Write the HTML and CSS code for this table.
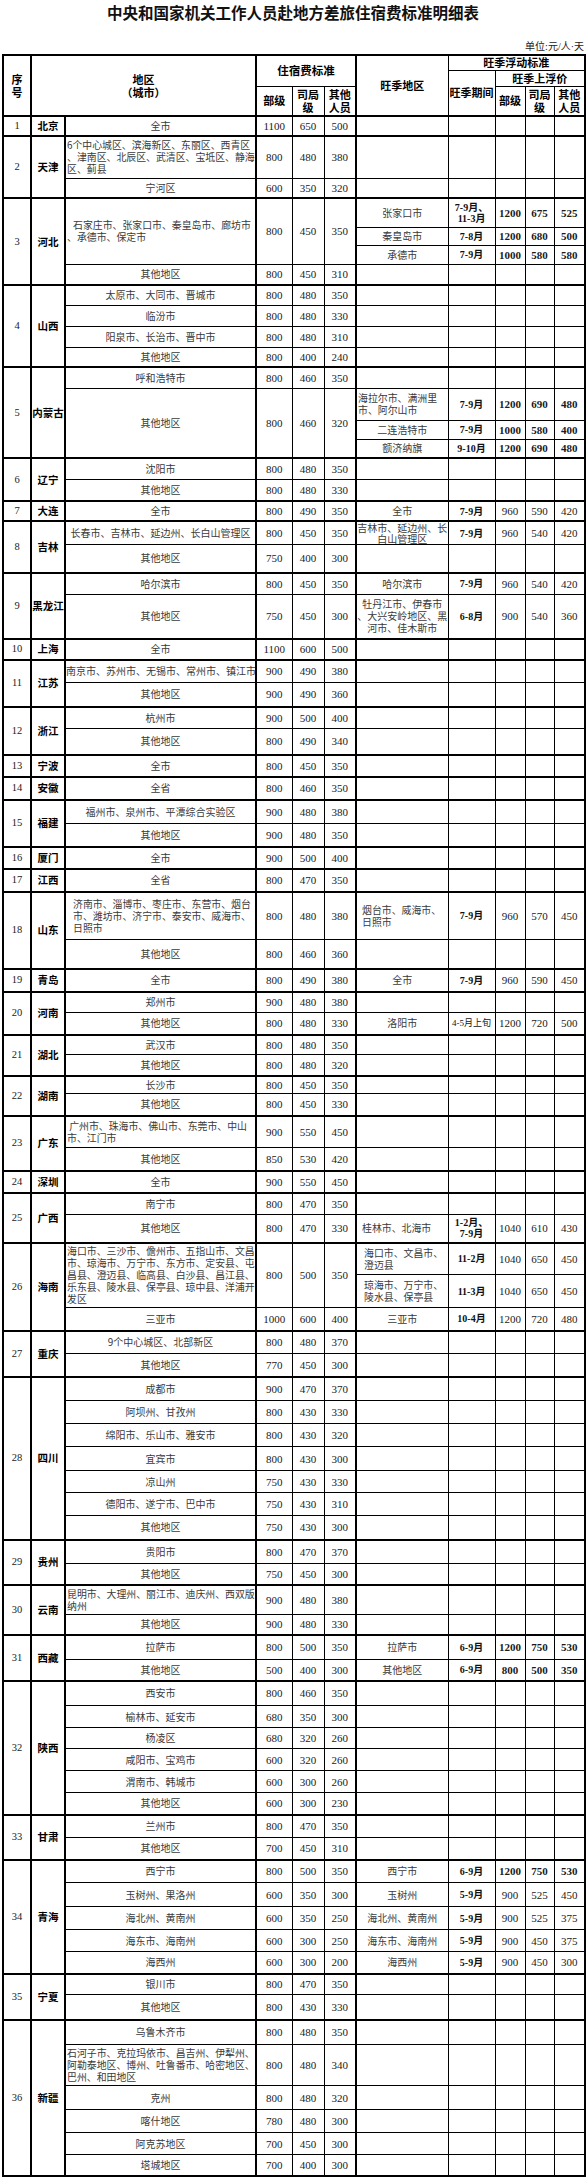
FILE: index.html
```html
<!DOCTYPE html>
<html lang="zh-CN">
<head>
<meta charset="utf-8">
<title>中央和国家机关工作人员赴地方差旅住宿费标准明细表</title>
<link rel="stylesheet" href="styles.css">
</head>
<body>
<div class="page">
<h1 class="title">中央和国家机关工作人员赴地方差旅住宿费标准明细表</h1>
<div class="unit">单位:元/人·天</div>
<table class="t">
<colgroup><col class="w1"><col class="w2"><col class="w3"><col class="w4"><col class="w5"><col class="w6"><col class="w7"><col class="w8"><col class="w9"><col class="w10"><col class="w11"></colgroup>
<thead>
<tr class="hh1"><th rowspan="3">序<br>号</th><th rowspan="3" colspan="2">地区<br>（城市）</th><th colspan="3" rowspan="2" class="big">住宿费标准</th><th rowspan="3">旺季地区</th><th colspan="4">旺季浮动标准</th></tr>
<tr class="hh2"><th rowspan="2">旺季期间</th><th colspan="3">旺季上浮价</th></tr>
<tr class="hh3"><th>部级</th><th>司局<br>级</th><th>其他<br>人员</th><th>部级</th><th>司局<br>级</th><th>其他<br>人员</th></tr>
</thead>
<tbody>
<tr class="h20"><td class="n">1</td><td class="p">北京</td><td class="c">全市</td><td>1100</td><td>650</td><td>500</td><td></td><td></td><td></td><td></td><td></td></tr>
</tbody>
<tbody>
<tr class="h42"><td class="n" rowspan="2">2</td><td class="p" rowspan="2">天津</td><td class="c l">6个中心城区、滨海新区、东丽区、西青区<br>、津南区、北辰区、武清区、宝坻区、静海<br>区、蓟县</td><td>800</td><td>480</td><td>380</td><td></td><td></td><td></td><td></td><td></td></tr>
<tr class="h20"><td class="c">宁河区</td><td>600</td><td>350</td><td>320</td><td></td><td></td><td></td><td></td><td></td></tr>
</tbody>
<tbody>
<tr class="h29"><td class="n" rowspan="4">3</td><td class="p" rowspan="4">河北</td><td class="c l" rowspan="3"><span class="ind">石家庄市、张家口市、秦皇岛市、廊坊市</span><br>、承德市、保定市</td><td rowspan="3">800</td><td rowspan="3">450</td><td rowspan="3">350</td><td class="c">张家口市</td><td class="pd">7-9月、<br>11-3月</td><td class="b">1200</td><td class="b">675</td><td class="b">525</td></tr>
<tr class="h18"><td class="c">秦皇岛市</td><td class="pd">7-8月</td><td class="b">1200</td><td class="b">680</td><td class="b">500</td></tr>
<tr class="h19"><td class="c">承德市</td><td class="pd">7-9月</td><td class="b">1000</td><td class="b">580</td><td class="b">580</td></tr>
<tr class="h21"><td class="c">其他地区</td><td>800</td><td>450</td><td>310</td><td></td><td></td><td></td><td></td><td></td></tr>
</tbody>
<tbody>
<tr class="h20"><td class="n" rowspan="4">4</td><td class="p" rowspan="4">山西</td><td class="c">太原市、大同市、晋城市</td><td>800</td><td>480</td><td>350</td><td></td><td></td><td></td><td></td><td></td></tr>
<tr class="h21"><td class="c">临汾市</td><td>800</td><td>480</td><td>330</td><td></td><td></td><td></td><td></td><td></td></tr>
<tr class="h21"><td class="c">阳泉市、长治市、晋中市</td><td>800</td><td>480</td><td>310</td><td></td><td></td><td></td><td></td><td></td></tr>
<tr class="h20"><td class="c">其他地区</td><td>800</td><td>400</td><td>240</td><td></td><td></td><td></td><td></td><td></td></tr>
</tbody>
<tbody>
<tr class="h21"><td class="n" rowspan="4">5</td><td class="p" rowspan="4">内蒙古</td><td class="c">呼和浩特市</td><td>800</td><td>460</td><td>350</td><td></td><td></td><td></td><td></td><td></td></tr>
<tr class="h32"><td class="c" rowspan="3">其他地区</td><td rowspan="3">800</td><td rowspan="3">460</td><td rowspan="3">320</td><td class="c l">海拉尔市、满洲里<br>市、阿尔山市</td><td class="pd">7-9月</td><td class="b">1200</td><td class="b">690</td><td class="b">480</td></tr>
<tr class="h19"><td class="c">二连浩特市</td><td class="pd">7-9月</td><td class="b">1000</td><td class="b">580</td><td class="b">400</td></tr>
<tr class="h19"><td class="c">额济纳旗</td><td class="pd">9-10月</td><td class="b">1200</td><td class="b">690</td><td class="b">480</td></tr>
</tbody>
<tbody>
<tr class="h21"><td class="n" rowspan="2">6</td><td class="p" rowspan="2">辽宁</td><td class="c">沈阳市</td><td>800</td><td>480</td><td>350</td><td></td><td></td><td></td><td></td><td></td></tr>
<tr class="h22"><td class="c">其他地区</td><td>800</td><td>480</td><td>330</td><td></td><td></td><td></td><td></td><td></td></tr>
</tbody>
<tbody>
<tr class="h20"><td class="n">7</td><td class="p">大连</td><td class="c">全市</td><td>800</td><td>490</td><td>350</td><td class="c">全市</td><td class="pd">7-9月</td><td>960</td><td>590</td><td>420</td></tr>
</tbody>
<tbody>
<tr class="h23"><td class="n" rowspan="2">8</td><td class="p" rowspan="2">吉林</td><td class="c">长春市、吉林市、延边州、长白山管理区</td><td>800</td><td>450</td><td>350</td><td class="c tight">吉林市、延边州、长<br>白山管理区</td><td class="pd">7-9月</td><td>960</td><td>540</td><td>420</td></tr>
<tr class="h28"><td class="c">其他地区</td><td>750</td><td>400</td><td>300</td><td></td><td></td><td></td><td></td><td></td></tr>
</tbody>
<tbody>
<tr class="h22"><td class="n" rowspan="2">9</td><td class="p" rowspan="2">黑龙江</td><td class="c">哈尔滨市</td><td>800</td><td>450</td><td>350</td><td class="c">哈尔滨市</td><td class="pd">7-9月</td><td>960</td><td>540</td><td>420</td></tr>
<tr class="h44"><td class="c">其他地区</td><td>750</td><td>450</td><td>300</td><td class="c">牡丹江市、伊春市<br>、大兴安岭地区、黑<br>河市、佳木斯市</td><td class="pd">6-8月</td><td>900</td><td>540</td><td>360</td></tr>
</tbody>
<tbody>
<tr class="h21"><td class="n">10</td><td class="p">上海</td><td class="c">全市</td><td>1100</td><td>600</td><td>500</td><td></td><td></td><td></td><td></td><td></td></tr>
</tbody>
<tbody>
<tr class="h23"><td class="n" rowspan="2">11</td><td class="p" rowspan="2">江苏</td><td class="c">南京市、苏州市、无锡市、常州市、镇江市</td><td>900</td><td>490</td><td>380</td><td></td><td></td><td></td><td></td><td></td></tr>
<tr class="h24"><td class="c">其他地区</td><td>900</td><td>490</td><td>360</td><td></td><td></td><td></td><td></td><td></td></tr>
</tbody>
<tbody>
<tr class="h22"><td class="n" rowspan="2">12</td><td class="p" rowspan="2">浙江</td><td class="c">杭州市</td><td>900</td><td>500</td><td>400</td><td></td><td></td><td></td><td></td><td></td></tr>
<tr class="h26"><td class="c">其他地区</td><td>800</td><td>490</td><td>340</td><td></td><td></td><td></td><td></td><td></td></tr>
</tbody>
<tbody>
<tr class="h22"><td class="n">13</td><td class="p">宁波</td><td class="c">全市</td><td>800</td><td>450</td><td>350</td><td></td><td></td><td></td><td></td><td></td></tr>
</tbody>
<tbody>
<tr class="h23"><td class="n">14</td><td class="p">安徽</td><td class="c">全省</td><td>800</td><td>460</td><td>350</td><td></td><td></td><td></td><td></td><td></td></tr>
</tbody>
<tbody>
<tr class="h24"><td class="n" rowspan="2">15</td><td class="p" rowspan="2">福建</td><td class="c">福州市、泉州市、平潭综合实验区</td><td>900</td><td>480</td><td>380</td><td></td><td></td><td></td><td></td><td></td></tr>
<tr class="h23"><td class="c">其他地区</td><td>900</td><td>480</td><td>350</td><td></td><td></td><td></td><td></td><td></td></tr>
</tbody>
<tbody>
<tr class="h22"><td class="n">16</td><td class="p">厦门</td><td class="c">全市</td><td>900</td><td>500</td><td>400</td><td></td><td></td><td></td><td></td><td></td></tr>
</tbody>
<tbody>
<tr class="h23"><td class="n">17</td><td class="p">江西</td><td class="c">全省</td><td>800</td><td>470</td><td>350</td><td></td><td></td><td></td><td></td><td></td></tr>
</tbody>
<tbody>
<tr class="h48"><td class="n" rowspan="2">18</td><td class="p" rowspan="2">山东</td><td class="c l ind2">济南市、淄博市、枣庄市、东营市、烟台<br>市、潍坊市、济宁市、泰安市、威海市、<br>日照市</td><td>800</td><td>480</td><td>380</td><td class="c l ind3">烟台市、威海市、<br>日照市</td><td class="pd">7-9月</td><td>960</td><td>570</td><td>450</td></tr>
<tr class="h29"><td class="c">其他地区</td><td>800</td><td>460</td><td>360</td><td></td><td></td><td></td><td></td><td></td></tr>
</tbody>
<tbody>
<tr class="h23"><td class="n">19</td><td class="p">青岛</td><td class="c">全市</td><td>800</td><td>490</td><td>380</td><td class="c">全市</td><td class="pd">7-9月</td><td>960</td><td>590</td><td>450</td></tr>
</tbody>
<tbody>
<tr class="h21"><td class="n" rowspan="2">20</td><td class="p" rowspan="2">河南</td><td class="c">郑州市</td><td>900</td><td>480</td><td>380</td><td></td><td></td><td></td><td></td><td></td></tr>
<tr class="h22"><td class="c">其他地区</td><td>800</td><td>480</td><td>330</td><td class="c">洛阳市</td><td class="pd sm">4-5月上旬</td><td>1200</td><td>720</td><td>500</td></tr>
</tbody>
<tbody>
<tr class="h20"><td class="n" rowspan="2">21</td><td class="p" rowspan="2">湖北</td><td class="c">武汉市</td><td>800</td><td>480</td><td>350</td><td></td><td></td><td></td><td></td><td></td></tr>
<tr class="h21"><td class="c">其他地区</td><td>800</td><td>480</td><td>320</td><td></td><td></td><td></td><td></td><td></td></tr>
</tbody>
<tbody>
<tr class="h18"><td class="n" rowspan="2">22</td><td class="p" rowspan="2">湖南</td><td class="c">长沙市</td><td>800</td><td>450</td><td>350</td><td></td><td></td><td></td><td></td><td></td></tr>
<tr class="h22"><td class="c">其他地区</td><td>800</td><td>450</td><td>330</td><td></td><td></td><td></td><td></td><td></td></tr>
</tbody>
<tbody>
<tr class="h32"><td class="n" rowspan="2">23</td><td class="p" rowspan="2">广东</td><td class="c l">&nbsp;广州市、珠海市、佛山市、东莞市、中山<br>市、江门市</td><td>900</td><td>550</td><td>450</td><td></td><td></td><td></td><td></td><td></td></tr>
<tr class="h23"><td class="c">其他地区</td><td>850</td><td>530</td><td>420</td><td></td><td></td><td></td><td></td><td></td></tr>
</tbody>
<tbody>
<tr class="h22"><td class="n">24</td><td class="p">深圳</td><td class="c">全市</td><td>900</td><td>550</td><td>450</td><td></td><td></td><td></td><td></td><td></td></tr>
</tbody>
<tbody>
<tr class="h22"><td class="n" rowspan="2">25</td><td class="p" rowspan="2">广西</td><td class="c">南宁市</td><td>800</td><td>470</td><td>350</td><td></td><td></td><td></td><td></td><td></td></tr>
<tr class="h28"><td class="c">其他地区</td><td>800</td><td>470</td><td>330</td><td class="c l ind3">桂林市、北海市</td><td class="pd">1-2月、<br>7-9月</td><td>1040</td><td>610</td><td>430</td></tr>
</tbody>
<tbody>
<tr class="h32"><td class="n" rowspan="3">26</td><td class="p" rowspan="3">海南</td><td class="c l" rowspan="2">海口市、三沙市、儋州市、五指山市、文昌<br>市、琼海市、万宁市、东方市、定安县、屯<br>昌县、澄迈县、临高县、白沙县、昌江县、<br>乐东县、陵水县、保亭县、琼中县、洋浦开<br>发区</td><td rowspan="2">800</td><td rowspan="2">500</td><td rowspan="2">350</td><td class="c l ind4">海口市、文昌市、<br>澄迈县</td><td class="pd">11-2月</td><td>1040</td><td>650</td><td>450</td></tr>
<tr class="h33"><td class="c l ind4">琼海市、万宁市、<br>陵水县、保亭县</td><td class="pd">11-3月</td><td>1040</td><td>650</td><td>450</td></tr>
<tr class="h23"><td class="c">三亚市</td><td>1000</td><td>600</td><td>400</td><td class="c">三亚市</td><td class="pd">10-4月</td><td>1200</td><td>720</td><td>480</td></tr>
</tbody>
<tbody>
<tr class="h23"><td class="n" rowspan="2">27</td><td class="p" rowspan="2">重庆</td><td class="c">9个中心城区、北部新区</td><td>800</td><td>480</td><td>370</td><td></td><td></td><td></td><td></td><td></td></tr>
<tr class="h23"><td class="c">其他地区</td><td>770</td><td>450</td><td>300</td><td></td><td></td><td></td><td></td><td></td></tr>
</tbody>
<tbody>
<tr class="h24"><td class="n" rowspan="7">28</td><td class="p" rowspan="7">四川</td><td class="c">成都市</td><td>900</td><td>470</td><td>370</td><td></td><td></td><td></td><td></td><td></td></tr>
<tr class="h23"><td class="c">阿坝州、甘孜州</td><td>800</td><td>430</td><td>330</td><td></td><td></td><td></td><td></td><td></td></tr>
<tr class="h23"><td class="c">绵阳市、乐山市、雅安市</td><td>800</td><td>430</td><td>320</td><td></td><td></td><td></td><td></td><td></td></tr>
<tr class="h24"><td class="c">宜宾市</td><td>800</td><td>430</td><td>300</td><td></td><td></td><td></td><td></td><td></td></tr>
<tr class="h22"><td class="c">凉山州</td><td>750</td><td>430</td><td>330</td><td></td><td></td><td></td><td></td><td></td></tr>
<tr class="h23"><td class="c">德阳市、遂宁市、巴中市</td><td>750</td><td>430</td><td>310</td><td></td><td></td><td></td><td></td><td></td></tr>
<tr class="h24"><td class="c">其他地区</td><td>750</td><td>430</td><td>300</td><td></td><td></td><td></td><td></td><td></td></tr>
</tbody>
<tbody>
<tr class="h24"><td class="n" rowspan="2">29</td><td class="p" rowspan="2">贵州</td><td class="c">贵阳市</td><td>800</td><td>470</td><td>370</td><td></td><td></td><td></td><td></td><td></td></tr>
<tr class="h21"><td class="c">其他地区</td><td>750</td><td>450</td><td>300</td><td></td><td></td><td></td><td></td><td></td></tr>
</tbody>
<tbody>
<tr class="h30"><td class="n" rowspan="2">30</td><td class="p" rowspan="2">云南</td><td class="c l">昆明市、大理州、丽江市、迪庆州、西双版<br>纳州</td><td>900</td><td>480</td><td>380</td><td></td><td></td><td></td><td></td><td></td></tr>
<tr class="h20"><td class="c">其他地区</td><td>900</td><td>480</td><td>330</td><td></td><td></td><td></td><td></td><td></td></tr>
</tbody>
<tbody>
<tr class="h25"><td class="n" rowspan="2">31</td><td class="p" rowspan="2">西藏</td><td class="c">拉萨市</td><td>800</td><td>500</td><td>350</td><td class="c">拉萨市</td><td class="pd">6-9月</td><td class="b">1200</td><td class="b">750</td><td class="b">530</td></tr>
<tr class="h21"><td class="c">其他地区</td><td>500</td><td>400</td><td>300</td><td class="c">其他地区</td><td class="pd">6-9月</td><td class="b">800</td><td class="b">500</td><td class="b">350</td></tr>
</tbody>
<tbody>
<tr class="h25"><td class="n" rowspan="6">32</td><td class="p" rowspan="6">陕西</td><td class="c">西安市</td><td>800</td><td>460</td><td>350</td><td></td><td></td><td></td><td></td><td></td></tr>
<tr class="h22"><td class="c">榆林市、延安市</td><td>680</td><td>350</td><td>300</td><td></td><td></td><td></td><td></td><td></td></tr>
<tr class="h21"><td class="c">杨凌区</td><td>680</td><td>320</td><td>260</td><td></td><td></td><td></td><td></td><td></td></tr>
<tr class="h22"><td class="c">咸阳市、宝鸡市</td><td>600</td><td>320</td><td>260</td><td></td><td></td><td></td><td></td><td></td></tr>
<tr class="h22"><td class="c">渭南市、韩城市</td><td>600</td><td>300</td><td>260</td><td></td><td></td><td></td><td></td><td></td></tr>
<tr class="h22"><td class="c">其他地区</td><td>600</td><td>300</td><td>230</td><td></td><td></td><td></td><td></td><td></td></tr>
</tbody>
<tbody>
<tr class="h23"><td class="n" rowspan="2">33</td><td class="p" rowspan="2">甘肃</td><td class="c">兰州市</td><td>800</td><td>470</td><td>350</td><td></td><td></td><td></td><td></td><td></td></tr>
<tr class="h22"><td class="c">其他地区</td><td>700</td><td>450</td><td>310</td><td></td><td></td><td></td><td></td><td></td></tr>
</tbody>
<tbody>
<tr class="h23"><td class="n" rowspan="5">34</td><td class="p" rowspan="5">青海</td><td class="c">西宁市</td><td>800</td><td>500</td><td>350</td><td class="c">西宁市</td><td class="pd">6-9月</td><td class="b">1200</td><td class="b">750</td><td class="b">530</td></tr>
<tr class="h24"><td class="c">玉树州、果洛州</td><td>600</td><td>350</td><td>300</td><td class="c">玉树州</td><td class="pd">5-9月</td><td>900</td><td>525</td><td>450</td></tr>
<tr class="h23"><td class="c">海北州、黄南州</td><td>600</td><td>350</td><td>250</td><td class="c">海北州、黄南州</td><td class="pd">5-9月</td><td>900</td><td>525</td><td>375</td></tr>
<tr class="h22"><td class="c">海东市、海南州</td><td>600</td><td>300</td><td>250</td><td class="c">海东市、海南州</td><td class="pd">5-9月</td><td>900</td><td>450</td><td>375</td></tr>
<tr class="h22"><td class="c">海西州</td><td>600</td><td>300</td><td>200</td><td class="c">海西州</td><td class="pd">5-9月</td><td>900</td><td>450</td><td>300</td></tr>
</tbody>
<tbody>
<tr class="h21"><td class="n" rowspan="2">35</td><td class="p" rowspan="2">宁夏</td><td class="c">银川市</td><td>800</td><td>470</td><td>350</td><td></td><td></td><td></td><td></td><td></td></tr>
<tr class="h25"><td class="c">其他地区</td><td>800</td><td>430</td><td>330</td><td></td><td></td><td></td><td></td><td></td></tr>
</tbody>
<tbody>
<tr class="h25"><td class="n" rowspan="6">36</td><td class="p" rowspan="6">新疆</td><td class="c">乌鲁木齐市</td><td>800</td><td>480</td><td>350</td><td></td><td></td><td></td><td></td><td></td></tr>
<tr class="h41"><td class="c l">石河子市、克拉玛依市、昌吉州、伊犁州、<br>阿勒泰地区、博州、吐鲁番市、哈密地区、<br>巴州、和田地区</td><td>800</td><td>480</td><td>340</td><td></td><td></td><td></td><td></td><td></td></tr>
<tr class="h24"><td class="c">克州</td><td>800</td><td>480</td><td>320</td><td></td><td></td><td></td><td></td><td></td></tr>
<tr class="h23"><td class="c">喀什地区</td><td>780</td><td>480</td><td>300</td><td></td><td></td><td></td><td></td><td></td></tr>
<tr class="h22"><td class="c">阿克苏地区</td><td>700</td><td>450</td><td>300</td><td></td><td></td><td></td><td></td><td></td></tr>
<tr class="h21"><td class="c">塔城地区</td><td>700</td><td>400</td><td>300</td><td></td><td></td><td></td><td></td><td></td></tr>
</tbody>
</table>
</div>
</body>
</html>
```
FILE: styles.css
```css
html, body {
  margin: 0;
  padding: 0;
  background: #fff;
}
body {
  font-family: "Noto Sans CJK SC", sans-serif;
  color: #000;
}
.page {
  width: 586px;
}
.title {
  margin: 0;
  padding-top: 1px;
  height: 22px;
  text-align: center;
  font-family: "Noto Sans CJK SC", sans-serif;
  font-weight: 700;
  font-size: 15.5px;
  line-height: 22px;
  color: #111;
}
.unit {
  margin-top: 18px;
  height: 12px;
  padding-right: 2px;
  text-align: right;
  font-family: "Liberation Serif", "Noto Sans CJK SC", serif;
  font-size: 10px;
  line-height: 12px;
  color: #222;
}
.t {
  margin: 1px 0 0 2px;
  width: 582px;
  table-layout: fixed;
  border-collapse: collapse;
  border: 2px solid #000;
}
.w1 { width: 28px; border-right: 2px solid #000; }
.w2 { width: 34px; border-right: 2px solid #000; }
.w3 { width: 191px; border-right: 2px solid #000; }
.w4 { width: 36px; }
.w5 { width: 32px; }
.w6 { width: 32px; border-right: 2px solid #000; }
.w7 { width: 92px; }
.w8 { width: 47px; }
.w9 { width: 30px; }
.w10 { width: 29px; }
.w11 { width: 31px; }

.t th, .t td {
  border: 1px solid #000;
  padding: 0;
  text-align: center;
  vertical-align: middle;
  overflow: hidden;
}
.t thead {
  border-bottom: 2px solid #000;
}
.t tbody {
  border-top: 2px solid #000;
}
.t th {
  font-family: "Noto Sans CJK SC", sans-serif;
  font-weight: 700;
  font-size: 11px;
  line-height: 13px;
  color: #000;
}
.t th.big {
  font-size: 11.5px;
}
.hh1 { height: 15px; }
.hh2 { height: 16px; }
.hh3 { height: 30px; }

.t td {
  font-family: "Liberation Serif", "Noto Sans CJK SC", serif;
  font-size: 11px;
  line-height: 12px;
  color: #1a1a1a;
}
.t td.n {
  font-size: 10.5px;
  color: #222;
}
.t td.p {
  font-family: "Noto Sans CJK SC", sans-serif;
  font-weight: 700;
  font-size: 10.5px;
  white-space: nowrap;
  overflow: visible;
  color: #000;
}
.t td.c {
  font-family: "Noto Sans CJK SC", sans-serif;
  font-size: 10px;
  line-height: 12px;
  color: #3a3a3a;
  white-space: nowrap;
}
.t td.l {
  text-align: left;
  padding-left: 1px;
  font-size: 9.9px;
}
.t td.tight {
  line-height: 11px;
}
.t td.ind2 { padding-left: 7px; }
.t td.ind3 { padding-left: 5px; }
.t td.ind4 { padding-left: 7px; }
.ind { padding-left: 6px; }
.t td.pd {
  font-weight: 700;
  font-size: 10px;
  line-height: 11px;
  white-space: nowrap;
  color: #111;
}
.t td.sm {
  font-size: 9px;
  font-weight: 400;
}
.t td.b {
  font-weight: 700;
}

.h18 { height: 18px; }
.h19 { height: 19px; }
.h20 { height: 20px; }
.h21 { height: 21px; }
.h22 { height: 22px; }
.h23 { height: 23px; }
.h24 { height: 24px; }
.h25 { height: 25px; }
.h26 { height: 26px; }
.h28 { height: 28px; }
.h29 { height: 29px; }
.h30 { height: 30px; }
.h32 { height: 32px; }
.h33 { height: 33px; }
.h41 { height: 41px; }
.h42 { height: 42px; }
.h44 { height: 44px; }
.h48 { height: 48px; }
```
